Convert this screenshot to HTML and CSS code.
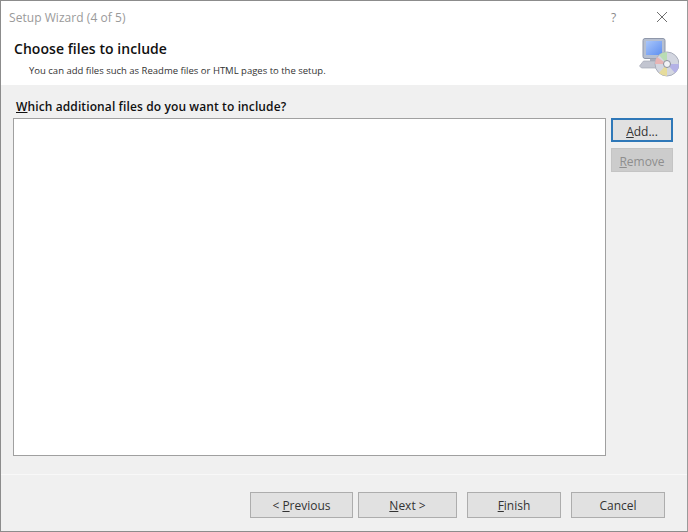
FILE: index.html
```html
<!DOCTYPE html>
<html lang="en">
<head>
	<meta charset="UTF-8">
	<title>Setup Wizard</title>
	<link rel="stylesheet" href="styles.css">
</head>
<body>
	<div class="window">
		<div class="titlebar">
			<span class="title">Setup Wizard (4 of 5)</span>
			<span class="help">?</span>
			<svg class="close" width="12" height="12" viewBox="0 0 12 12">
				<path d="M1 1 L11 11 M11 1 L1 11" stroke="#6e6e6e" stroke-width="1" fill="none"/>
			</svg>
		</div>
		<div class="header">
			<div class="header-text">
				<h1>Choose files to include</h1>
				<p>You can add files such as Readme files or HTML pages to the setup.</p>
			</div>
			<svg class="logo" width="40" height="40" viewBox="0 0 40 40">
				<defs>
					<linearGradient id="screen" x1="0" y1="0" x2="1" y2="1">
						<stop offset="0" stop-color="#a9c6fa"/>
						<stop offset="1" stop-color="#5f8ff0"/>
					</linearGradient>
				</defs>
				<rect x="4" y="0.5" width="22" height="20" rx="2" fill="#b6bfd0" stroke="#8f97aa"/>
				<rect x="7" y="3" width="16" height="14" fill="url(#screen)"/>
				<path d="M11 20.5 h8 v3 h-8 z" fill="#a8adbb"/>
				<path d="M0.5 28 l4 -5 h15 v7 h-17 z" fill="#c2c5d0" stroke="#a5a9b6" stroke-width="0.7"/>
				<circle cx="28" cy="26" r="12" fill="#d3d6e0" stroke="#a9adba"/>
				<path d="M28 26 L20 17 A12 12 0 0 1 28 14 z" fill="#b9dcb4"/>
				<path d="M28 26 L40 26 A12 12 0 0 1 36 35 z" fill="#b4b2e6"/>
				<path d="M28 26 L28 38 A12 12 0 0 1 20 35 z" fill="#e6dc9c"/>
				<path d="M28 26 L16 26 A12 12 0 0 1 18 19 z" fill="#e8b4b4"/>
				<circle cx="28" cy="26" r="3.5" fill="#f2f3f6" stroke="#8b8f9c"/>
			</svg>
		</div>
		<div class="body">
			<label class="prompt"><u>W</u>hich additional files do you want to include?</label>
			<div class="files">
				<div class="list"></div>
				<div class="side">
					<button class="btn side-btn focused"><u>A</u>dd...</button>
					<button class="btn side-btn disabled"><u>R</u>emove</button>
				</div>
			</div>
		</div>
		<div class="footer">
			<button class="btn prev">&lt; <u>P</u>revious</button>
			<button class="btn next"><u>N</u>ext &gt;</button>
			<button class="btn finish"><u>F</u>inish</button>
			<button class="btn cancel">Cancel</button>
		</div>
	</div>
</body>
</html>
```

FILE: styles.css
```css
*{
	margin: 0;
	padding: 0;
	box-sizing: border-box;
}
body{
	width: 688px;
	height: 532px;
	overflow: hidden;
	font-family: "Open Sans", "Liberation Sans", sans-serif;
	font-size: 12px;
	color: #1a1a1a;
}
.window{
	width: 688px;
	height: 532px;
	display: flex;
	flex-direction: column;
	border: 1px solid #8c8c8c;
	border-right-color: #9a9a9a;
	background: #f0f0f0;
}

/* title bar */
.titlebar{
	height: 32px;
	display: flex;
	align-items: center;
	background: #fff;
	padding-left: 8px;
}
.title{
	flex: 1;
	color: #9a9a9a;
	font-size: 12px;
	letter-spacing: 0.05px;
}
.help{
	width: 12px;
	margin-right: 33px;
	color: #8a8a8a;
	font-size: 12px;
}
.close{
	margin-right: 19px;
}

/* white header */
.header{
	height: 52px;
	display: flex;
	justify-content: space-between;
	background: #fff;
}
.header-text{
	padding-left: 13px;
}
.header h1{
	font-size: 14px;
	font-weight: 600;
	line-height: 18px;
	letter-spacing: 0.05px;
	color: #111;
	margin-top: 7px;
}
.header p{
	font-size: 9.5px;
	line-height: 14px;
	margin-top: 6px;
	padding-left: 15px;
	color: #333;
}
.logo{
	margin: 5px 8px 0 0;
}

/* middle */
.body{
	flex: 1;
	padding: 12px 14px 0 12px;
	display: flex;
	flex-direction: column;
}
.prompt{
	font-size: 12px;
	font-weight: 600;
	line-height: 17px;
	letter-spacing: 0.11px;
	padding: 1px 0 0 3px;
	color: #111;
	height: 21px;
}
.files{
	display: flex;
	gap: 5px;
}
.list{
	width: 593px;
	height: 338px;
	background: #fff;
	border: 1px solid #a0a0a0;
}
.side{
	display: flex;
	flex-direction: column;
	gap: 6px;
}

/* buttons */
.btn{
	font-family: inherit;
	font-size: 12px;
	color: #333;
	background: #e1e1e1;
	border: 1px solid #adadad;
	height: 26px;
}
.side-btn{
	width: 62px;
	height: 24px;
	padding-top: 2px;
}
.focused{
	border: 2px solid #2f78b8;
}
.disabled{
	background: #cccccc;
	border-color: #c4c4c4;
	color: #8e8e8e;
}

/* footer */
.footer{
	height: 57px;
	border-top: 1px solid #f8f8f8;
	padding: 17px 0 0 249px;
	display: flex;
}
.prev{
	width: 103px;
	margin-right: 5px;
}
.next{
	width: 99px;
	margin-right: 10px;
}
.finish{
	width: 94px;
	margin-right: 10px;
}
.cancel{
	width: 94px;
}
```
